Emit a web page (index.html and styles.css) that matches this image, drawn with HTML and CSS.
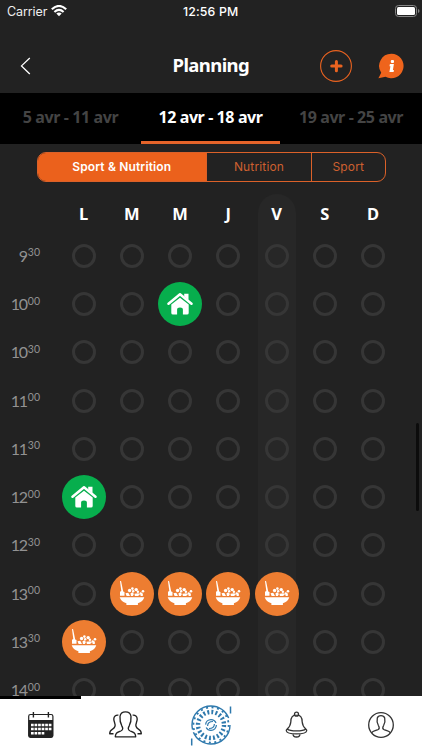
FILE: index.html
```html
<!DOCTYPE html>
<html lang="fr">
<head>
<meta charset="utf-8">
<title>Planning</title>
<link rel="stylesheet" href="styles.css">
</head>
<body>
<svg class="defs" width="0" height="0">
  <symbol id="home" viewBox="0 0 26 26">
    <path d="M1.5 12.8 13 3.3 24.5 12.8" fill="none" stroke="#fff" stroke-width="2.5" stroke-linecap="round" stroke-linejoin="round"/>
    <path d="M17.2 2.8H21.5V9L17.2 5.5ZM4.3 13.6 13 6.7 21.7 13.6V22Q21.7 23.6 20 23.6H15.9V18.5Q15.9 16.5 13 16.5T10.1 18.5V23.6H6Q4.3 23.6 4.3 22Z" fill="#fff"/>
  </symbol>
  <symbol id="bowl" viewBox="0 0 26 26" fill="#fff">
    <path d="M.7 16.2H25.3Q24 20.5 18.9 22.2V23.9H7.4V22.2Q2 20.5.7 16.2ZM1 .3Q1.5-.6 2.1.3L4.2 10.6 5.5 11V14.8H1V10.7L2.3 10Z"/>
    <path d="M6.5 12.2 9.3 11.7 11 14.9H7.6ZM11.5 12.2l2-.9 1.4 1.8-1 1.8h-2ZM15.4 12.8l4-.6 1.5 1.5-2 1.2h-3ZM21.5 12l2.4.6-.1 2.3h-2.2Z"/>
    <circle cx="10.6" cy="9.5" r="1.7"/><circle cx="13.4" cy="7.6" r="1.3"/><circle cx="14.2" cy="10.3" r="1.2"/><circle cx="17.2" cy="8.6" r="1.7"/><circle cx="18.9" cy="10.8" r="1.2"/><circle cx="24" cy="10.3" r="1.3"/><circle cx="21.7" cy="12.4" r="1.2"/>
  </symbol>
</svg>
<div class="app">
  <div class="status">
    <span class="carrier">Carrier</span>
    <svg class="wifi" width="16" height="12" viewBox="0 0 16 12"><path d="M.8 4.3Q8-2.4 15.2 4.3M3.4 7Q8 2.8 12.6 7" fill="none" stroke="#fff" stroke-width="2.1"/><path d="M5.3 8.6Q8 6.4 10.7 8.6L8 11.3Z" fill="#fff"/></svg>
    <span class="clock">12:56 PM</span>
    <svg class="battery" width="25" height="12" viewBox="0 0 25 12"><rect x=".5" y=".5" width="21" height="11" rx="3" fill="none" stroke="#858585"/><rect x="2" y="2" width="18" height="8" rx="1.5" fill="#fff"/><path d="M23 4Q24.5 4.5 24.5 6T23 8Z" fill="#858585"/></svg>
  </div>
  <header class="nav">
    <svg class="back" width="12" height="18" viewBox="0 0 12 18"><path d="M9.8 1 1.5 8.9 9.8 17" fill="none" stroke="#fff" stroke-width="1.3"/></svg>
    <h1>Planning</h1>
    <svg class="add" width="32" height="32" viewBox="0 0 32 32"><circle cx="16" cy="16" r="15.4" fill="none" stroke="#ea6320" stroke-width="1.1"/><path d="M16.4 11.4V20.8M11.7 16.1H21.1" stroke="#ea6320" stroke-width="3" stroke-linecap="round"/></svg>
    <svg class="info" width="26" height="26" viewBox="0 0 26 26"><path d="M13.5.8A12.2 12.2 0 1 1 7.5 23.7L.4 25.3 3.2 19.8A12.2 12.2 0 0 1 13.5.8Z" fill="#ef641c"/><g fill="#fff"><rect x="12.8" y="7" width="3.2" height="3" rx="1"/><path d="M11.9 11.1h4l-1 5.9h1l-.3 2.1h-4.2l1-5.9h-.9Z"/></g></svg>
  </header>
  <nav class="weeks">
    <span class="week">5 avr - 11 avr</span>
    <span class="week active">12 avr - 18 avr</span>
    <span class="week">19 avr - 25 avr</span>
  </nav>
  <div class="filter">
    <span class="on">Sport &amp; Nutrition</span><span>Nutrition</span><span>Sport</span>
  </div>
  <main class="planning">
    <div class="today"></div>
    <div class="row days"><b></b><b>L</b><b>M</b><b>M</b><b>J</b><b>V</b><b>S</b><b>D</b></div>
    <div class="row"><span class="time">9<sup>30</sup></span><i></i><i></i><i></i><i></i><i></i><i></i><i></i></div>
    <div class="row"><span class="time">10<sup>00</sup></span><i></i><i></i><span class="event sport"><svg><use href="#home"/></svg></span><i></i><i></i><i></i><i></i></div>
    <div class="row"><span class="time">10<sup>30</sup></span><i></i><i></i><i></i><i></i><i></i><i></i><i></i></div>
    <div class="row"><span class="time">11<sup>00</sup></span><i></i><i></i><i></i><i></i><i></i><i></i><i></i></div>
    <div class="row"><span class="time">11<sup>30</sup></span><i></i><i></i><i></i><i></i><i></i><i></i><i></i></div>
    <div class="row"><span class="time">12<sup>00</sup></span><span class="event sport"><svg><use href="#home"/></svg></span><i></i><i></i><i></i><i></i><i></i><i></i></div>
    <div class="row"><span class="time">12<sup>30</sup></span><i></i><i></i><i></i><i></i><i></i><i></i><i></i></div>
    <div class="row"><span class="time">13<sup>00</sup></span><i></i><span class="event meal"><svg><use href="#bowl"/></svg></span><span class="event meal"><svg><use href="#bowl"/></svg></span><span class="event meal"><svg><use href="#bowl"/></svg></span><span class="event meal"><svg><use href="#bowl"/></svg></span><i></i><i></i></div>
    <div class="row"><span class="time">13<sup>30</sup></span><span class="event meal"><svg><use href="#bowl"/></svg></span><i></i><i></i><i></i><i></i><i></i><i></i></div>
    <div class="row"><span class="time">14<sup>00</sup></span><i></i><i></i><i></i><i></i><i></i><i></i><i></i></div>
    <div class="scrollbar"></div>
  </main>
  <footer class="tabs">
    <span class="tab current"><svg width="28" height="28" viewBox="0 0 28 28"><rect x="1.7" y="3.5" width="24.2" height="22.8" rx="1.8" fill="#fff" stroke="#222" stroke-width="1.2"/><path d="M1.5 9H26v15.5q0 2-2 2H3.5q-2 0-2-2Z" fill="#222"/><path d="M6.4 1V6.5M21.4 1V6.5" stroke="#222" stroke-width="1.4"/><path d="M4 14H24.5M4 18H24.5M4 22.2H17.3" stroke="#fff" stroke-width="2.6" stroke-dasharray="2.7 .85"/></svg></span>
    <span class="tab"><svg width="33" height="28" viewBox="0 0 33 28" fill="none" stroke="#222" stroke-width="1.35" stroke-linejoin="round"><path d="M6.3 25.8C6.5 21.8 8 21.6 11.8 20C14.4 18.8 14 16.9 12.8 14.8C11.2 11.8 10.8 8 11 5.5C11.4 2.2 13.3.9 16.5.9S21.6 2.2 22 5.5C22.2 8 21.8 11.8 20.2 14.8C19 16.9 18.6 18.8 21.2 20C25 21.6 26.5 21.8 26.7 25.8Z"/><path d="M9.4 4.2C6.6 3.9 4.9 5.2 4.8 8C4.7 11 6.8 12.4 5.9 15.5C4.7 19.4.7 17.4.7 22.7H4.5M23.6 4.2C26.4 3.9 28.1 5.2 28.2 8C28.3 11 26.2 12.4 27.1 15.5C28.3 19.4 32.3 17.4 32.3 22.7H28.5"/></svg></span>
    <span class="tab"><svg width="42" height="44" viewBox="0 0 42 44" fill="none" stroke="#2e79ad"><circle cx="21" cy="22" r="19" stroke-width="1.4" stroke-dasharray="52 2.5 57 8.4"/><circle cx="21" cy="22" r="17.6" stroke-width="1.8" stroke-dasharray="2 3.529"/><circle cx="21" cy="22" r="13" stroke-width="4.4" stroke-dasharray="1.9 2.184"/><circle cx="21" cy="22" r="5.4" stroke-width="1.2" stroke-dasharray="14 2.96"/><path d="M17.6 23Q17.6 18.5 23 18.5M24.4 21Q24.4 25.5 19 25.5" stroke-width="1.2"/><path d="M40.5 3.5V10.5M1.7 35.5V42.5" stroke-width="1.5"/></svg></span>
    <span class="tab"><svg width="23" height="28" viewBox="0 0 23 28" fill="none" stroke="#333" stroke-width="1.3"><circle cx="11.5" cy="3.2" r="2"/><path d="M11.5 3.9C7.2 3.9 5.8 7 5.8 11C5.5 15 3.8 16.7 2 18.2Q.9 19.1 1.4 20C2 23.8 21 23.8 21.6 20Q22.1 19.1 21 18.2C19.2 16.7 17.5 15 17.2 11C17.2 7 15.8 3.9 11.5 3.9ZM2.2 18C5 20.6 18 20.6 20.8 18M8 23C8 27 15 27 15 23"/></svg></span>
    <span class="tab"><svg width="28" height="28" viewBox="0 0 28 28" fill="none" stroke="#333" stroke-width="1.3"><circle cx="14" cy="14" r="12.3"/><path d="M4.5 22C5.2 19.8 9 19.6 11.3 18.5C12.8 17.5 12.2 15.8 11.4 14.5C10 12 9.8 9.2 10.3 7C10.9 5.2 12.2 4.7 14 4.7S17.1 5.2 17.7 7C18.2 9.2 18 12 16.6 14.5C15.8 15.8 15.2 17.5 16.7 18.5C19 19.6 22.8 19.8 23.5 22"/></svg></span>
  </footer>
</div>
</body>
</html>
```
FILE: styles.css
```css
* { box-sizing: border-box; }
body { margin: 0; background: #222; }
.defs { position: absolute; }
.app {
  width: 422px;
  height: 750px;
  overflow: hidden;
  display: flex;
  flex-direction: column;
  background: #222;
  color: #fff;
  font-family: "Noto Sans", sans-serif;
}
.app svg { display: block; flex: none; }
.status {
  height: 22px;
  flex: none;
  display: flex;
  align-items: center;
  padding: 0 7px;
  font: 12.5px/21px Inter, sans-serif;
}
.carrier { width: 40px; letter-spacing: -.1px; margin-right: 4px; color: #eee; }
.clock { margin-left: 116px; font-weight: 500; font-size: 12.3px; white-space: nowrap; width: 80px; letter-spacing: .15px; }
.battery { margin-left: auto; margin-right: -5px; }
.nav { height: 71px; flex: none; display: flex; align-items: center; padding: 16px 18px 0 20px; }
.nav h1 {
  margin: -1px 0 0 140.5px;
  width: 78.5px;
  font-size: 18.5px;
  line-height: 24px;
  font-weight: 700;
  letter-spacing: -.6px;
  white-space: nowrap;
}
.nav .add { margin-left: 69px; margin-top: 1px; }
.nav .info { margin-left: auto; }
.weeks { height: 51px; flex: none; display: grid; grid-template-columns: 141px 139px 142px; background: #000; }
.week {
  padding-top: 12px;
  text-align: center;
  color: #444;
  font-size: 16px;
  line-height: 24px;
  font-weight: 700;
  letter-spacing: -.4px;
  white-space: nowrap;
}
.week.active { color: #fff; border-bottom: 3px solid #e5642a; }
.filter {
  flex: none;
  width: 349px;
  height: 30px;
  margin: 8px 0 0 36.5px;
  display: grid;
  grid-template-columns: 168.5px 105px 1fr;
  border: 1px solid #db6129;
  border-radius: 9px;
  overflow: hidden;
  font: 12px/28px Inter, sans-serif;
  letter-spacing: .15px;
  text-align: center;
  color: #cd6030;
}
.filter span + span { border-left: 1px solid #db6129; }
.filter .on { background: #eb611c; color: #fff; font-weight: 600; }
.planning { position: relative; flex: 1; min-height: 0; overflow: hidden; }
.today { position: absolute; left: 257.5px; top: 12px; width: 38px; height: 520px; border-radius: 19px 19px 0 0; background: #272727; }
.row {
  position: relative;
  display: grid;
  grid-template-columns: 59.4px repeat(7, 48.25px);
  height: 48.25px;
  align-items: center;
  justify-items: center;
}
.days { height: 49.8px; padding-top: 14px; font-size: 16.5px; line-height: 24px; }
.row i { width: 24px; height: 24px; border: 3px solid #363636; border-radius: 50%; }
.time {
  justify-self: start;
  width: 40px;
  text-align: right;
  color: #929292;
  font: 16px/22px Lato, sans-serif;
  letter-spacing: -1.1px;
  white-space: nowrap;
}
.time sup { margin-left: .8px; font-size: 10.5px; line-height: 0; vertical-align: 5.5px; letter-spacing: 0; }
.event { width: 44px; height: 44px; border-radius: 50%; display: grid; place-items: center; }
.event svg { width: 26px; height: 26px; }
.sport { background: #07ae4d; }
.meal { background: #ed7d31; }
.scrollbar { position: absolute; right: 3px; top: 241px; width: 3px; height: 88px; border-radius: 2px; background: #0c0c0c; }
.tabs { height: 54px; flex: none; display: grid; grid-template-columns: 81px 89px 82px 88px 82px; background: #fff; }
.tab { display: grid; place-items: center; border-top: 3px solid #fff; }
.tab.current { border-color: #000; }
```
